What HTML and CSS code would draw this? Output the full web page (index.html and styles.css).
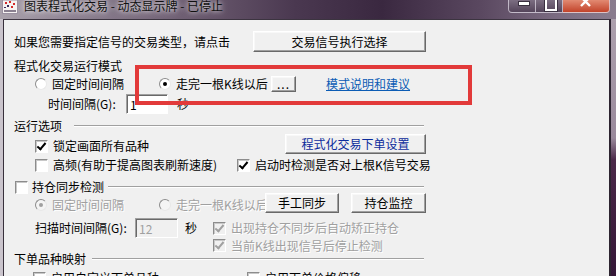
FILE: index.html
```html
<!DOCTYPE html>
<html>
<head>
  <meta charset="UTF-8">
  <title>图表程式化交易 - 动态显示牌 - 已停止</title>
  <link rel="stylesheet" href="styles.css">
</head>
<body>
  <div class="titlebar">
    <svg class="app-icon" width="16" height="14" viewBox="0 0 16 14">
      <rect x="0.5" y="0" width="15" height="13.5" fill="#f6f2f2" stroke="#9a90a0"/>
      <rect x="3" y="2" width="2" height="2" fill="#d42a2a"/>
      <rect x="7" y="1" width="2" height="2" fill="#d42a2a"/>
      <rect x="11" y="3" width="2" height="2" fill="#d42a2a"/>
      <rect x="5" y="5" width="2" height="2" fill="#3a2a5a"/>
      <rect x="9" y="6" width="2" height="2" fill="#d42a2a"/>
      <rect x="2" y="7" width="2" height="1" fill="#3a2a5a"/>
      <rect x="2" y="10" width="12" height="2" fill="#8a8090"/>
    </svg>
    <span class="title-text">图表程式化交易 - 动态显示牌 - 已停止</span>
    <div class="caption">
      <span class="cap-btn cap-min"></span>
      <span class="cap-btn cap-max"></span>
      <span class="cap-btn cap-close">
        <svg width="12" height="8" viewBox="0 0 12 8">
          <path d="M1 -3 L10 6 M10 -3 L1 6" stroke="#fff" stroke-width="2.4"/>
        </svg>
      </span>
    </div>
  </div>

  <div class="frame">
    <div class="left-edge"></div>
    <div class="client">
      <div class="row r-head">
        <span class="lbl">如果您需要指定信号的交易类型，请点击</span>
        <button class="btn btn-signal">交易信号执行选择</button>
      </div>

      <div class="row r-mode">
        <span class="lbl">程式化交易运行模式</span>
      </div>

      <div class="row r-radios">
        <div class="opt w-fixed"><span class="radio"></span><span class="lbl">固定时间间隔</span></div>
        <div class="opt w-bar"><span class="radio on"></span><span class="lbl">走完一根K线以后</span></div>
        <button class="btn btn-dots">...</button>
        <a class="link">模式说明和建议</a>
      </div>

      <div class="row r-interval">
        <span class="lbl w-interval">时间间隔(G):</span>
        <input class="field f-interval" type="text" value="1">
        <span class="lbl sec">秒</span>
      </div>

      <div class="row r-group">
        <span class="lbl">运行选项</span>
        <span class="rule rule-opts"></span>
      </div>

      <div class="row r-lock">
        <div class="opt"><span class="chk on"></span><span class="lbl">锁定画面所有品种</span></div>
        <button class="btn btn-order">程式化交易下单设置</button>
      </div>

      <div class="row r-hf">
        <div class="opt w-hf"><span class="chk"></span><span class="lbl">高频(有助于提高图表刷新速度)</span></div>
        <div class="opt"><span class="chk on"></span><span class="lbl">启动时检测是否对上根K信号交易</span></div>
      </div>

      <div class="row r-sync-head">
        <div class="opt opt-tight"><span class="chk"></span><span class="lbl">持仓同步检测</span></div>
        <span class="rule rule-sync"></span>
      </div>

      <div class="row r-sync-mode">
        <div class="opt w-fixed off"><span class="radio on"></span><span class="lbl">固定时间间隔</span></div>
        <div class="opt w-bar2 off"><span class="radio"></span><span class="lbl">走完一根K线以后</span></div>
        <button class="btn btn-manual">手工同步</button>
        <button class="btn btn-monitor">持仓监控</button>
      </div>

      <div class="row r-scan">
        <span class="lbl w-scan">扫描时间间隔(G):</span>
        <input class="field f-scan" type="text" value="12" disabled>
        <span class="lbl sec2">秒</span>
        <div class="opt off opt-fix"><span class="chk on"></span><span class="lbl">出现持仓不同步后自动矫正持仓</span></div>
      </div>

      <div class="row r-stop">
        <div class="opt off"><span class="chk on"></span><span class="lbl">当前K线出现信号后停止检测</span></div>
      </div>

      <div class="row r-group r-map-head">
        <span class="lbl">下单品种映射</span>
        <span class="rule rule-map"></span>
      </div>

      <div class="row r-map">
        <div class="opt w-map"><span class="chk"></span><span class="lbl">启用自定义下单品种</span></div>
        <div class="opt"><span class="chk"></span><span class="lbl">启用下单价格偏移</span></div>
      </div>

      <div class="mark"></div>
    </div>
  </div>
</body>
</html>
```

FILE: styles.css
```css
* {
  box-sizing: border-box;
}

html, body {
  margin: 0;
  padding: 0;
}

body {
  width: 616px;
  height: 276px;
  overflow: hidden;
  font-family: "Noto Sans CJK SC", "Noto Sans", sans-serif;
  font-size: 12px;
  color: #000;
  background: linear-gradient(180deg, #b0a4b0 0%, #9a8a9c 50%, #4a2848 58%, #341636 100%);
}

/* Aero title bar */
.titlebar {
  display: flex;
  align-items: flex-start;
  height: 19px;
  padding-left: 2px;
  background: linear-gradient(90deg, #aaa2ac 0%, #8e8292 12%, #6e5e72 30%, #4a3850 48%, #3a2840 62%, #5a4860 78%, #7a6a80 90%, #8a7c8e 100%);
}

.app-icon {
  flex: none;
}

.title-text {
  margin-left: 6px;
  line-height: 12px;
  color: #111;
  white-space: nowrap;
  text-shadow: 0 0 4px rgba(255, 255, 255, 0.9), 0 0 8px rgba(255, 255, 255, 0.6);
}

.caption {
  display: flex;
  margin-left: auto;
  margin-right: 6px;
}

.cap-btn {
  position: relative;
  height: 13px;
  border: 1px solid rgba(220, 214, 226, 0.75);
  border-top: none;
  background: linear-gradient(180deg, #7c6e82, #54445a);
  overflow: hidden;
}

.cap-min {
  width: 28px;
  border-bottom-left-radius: 4px;
}

.cap-max {
  width: 27px;
  border-left: none;
}

.cap-close {
  width: 47px;
  border-left: none;
  border-bottom-right-radius: 4px;
  background: linear-gradient(180deg, #e28a72, #c2432a);
  display: flex;
  justify-content: center;
}

.cap-min::after {
  content: '';
  position: absolute;
  left: 9px;
  top: 1px;
  width: 10px;
  height: 3px;
  background: #fff;
  border: 1px solid #3a3040;
}

.cap-max::after {
  content: '';
  position: absolute;
  left: 9px;
  top: -3px;
  width: 8px;
  height: 10px;
  border: 2px solid #fff;
  outline: 1px solid #3a3040;
}

/* frame + client area */
.frame {
  display: flex;
  height: 257px;
}

.left-edge {
  width: 3px;
  background: #cac4cc;
}

.client {
  position: relative;
  width: 608px;
  height: 257px;
  padding: 11px 0 0 10px;
  background: #f0f0f0;
  border-left: 1px solid #38303c;
  border-top: 1px solid #3c3440;
  border-right: 2px solid #2c2430;
  overflow: hidden;
}

.row {
  display: flex;
  align-items: center;
  width: 412px;
}

.lbl {
  line-height: 14px;
  white-space: nowrap;
}

.opt {
  display: flex;
  align-items: center;
  gap: 5px;
  flex: none;
}

.opt-tight {
  gap: 4px;
}

.off {
  color: #a0a0a0;
  text-shadow: 1px 1px 0 #fff;
}

/* controls */
.btn {
  flex: none;
  height: 20px;
  padding: 0;
  font: inherit;
  color: #000;
  line-height: 16px;
  background: #f0f0f0;
  border: 1px solid;
  border-color: #fff #696969 #696969 #fff;
  box-shadow: inset -1px -1px #a0a0a0, inset 1px 1px #f8f8f8;
}

.chk {
  position: relative;
  flex: none;
  width: 13px;
  height: 13px;
  background: #fff;
  border: 1px solid;
  border-color: #8c8c8c #fff #fff #8c8c8c;
  box-shadow: inset 1px 1px #c8c8c8;
}

.chk.on::after {
  content: '';
  position: absolute;
  left: 3px;
  top: 0;
  width: 3px;
  height: 7px;
  border: solid #000;
  border-width: 0 2px 2px 0;
  transform: rotate(40deg);
}

.off .chk {
  background: #f0f0f0;
}

.off .chk.on::after {
  border-color: #a0a0a0;
}

.radio {
  position: relative;
  flex: none;
  width: 12px;
  height: 12px;
  border-radius: 50%;
  background: #fff;
  border: 1px solid;
  border-color: #8c8c8c #e8e8e8 #e8e8e8 #8c8c8c;
}

.radio.on::after {
  content: '';
  position: absolute;
  left: 3px;
  top: 3px;
  width: 4px;
  height: 4px;
  border-radius: 50%;
  background: #000;
}

.off .radio {
  background: #f4f4f4;
}

.off .radio.on::after {
  background: #a0a0a0;
}

.field {
  flex: none;
  height: 20px;
  padding: 0 0 0 3px;
  font: inherit;
  color: #000;
  background: #fff;
  border: 1px solid;
  border-color: #a0a0a0 #fff #fff #a0a0a0;
  box-shadow: inset 1px 1px #696969;
  outline: none;
}

.field:disabled {
  color: #a0a0a0;
  background: #f0f0f0;
}

.rule {
  flex: 1;
  height: 2px;
  margin-right: 2px;
  border-top: 1px solid #a0a0a0;
  border-bottom: 1px solid #fff;
}

.link {
  margin-left: 30px;
  line-height: 14px;
  color: #0b5cb5;
  text-decoration: underline;
  white-space: nowrap;
}

/* rows */
.r-head {
  height: 21px;
}

.btn-signal {
  width: 173px;
  height: 21px;
  margin-left: auto;
}

.r-mode {
  height: 16px;
  margin-top: 6px;
}

.r-radios {
  height: 16px;
  margin-top: 2px;
  padding-left: 21px;
}

.w-fixed {
  width: 124px;
}

.w-bar {
  width: 112px;
}

.btn-dots {
  width: 25px;
  height: 16px;
  line-height: 12px;
  letter-spacing: 1px;
}

.r-interval {
  height: 20px;
  margin-top: 2px;
  padding-left: 34px;
}

.w-interval {
  width: 78px;
}

.f-interval {
  width: 42px;
}

.sec {
  margin-left: 9px;
}

.r-group {
  height: 14px;
  margin-top: 5px;
}

.rule-opts {
  margin-left: 12px;
}

.r-lock {
  height: 21px;
  padding-left: 21px;
}

.r-lock .opt {
  margin-top: 5px;
}

.btn-order {
  width: 141px;
  margin-left: auto;
  color: #0c2c9c;
}

.r-hf {
  height: 14px;
  margin-top: 4px;
  padding-left: 21px;
}

.w-hf {
  width: 202px;
}

.r-sync-head {
  height: 12px;
  margin-top: 9px;
  padding-left: 1px;
}

.rule-sync {
  margin-left: 4px;
}

.r-sync-mode {
  height: 20px;
  padding-left: 21px;
}

.r-sync-mode .opt {
  margin-top: 4px;
}

.w-bar2 {
  width: 106px;
}

.btn-manual {
  width: 74px;
}

.btn-monitor {
  width: 75px;
  margin-left: 12px;
}

.r-scan {
  height: 20px;
  margin-top: 5px;
  padding-left: 21px;
}

.w-scan {
  width: 100px;
}

.f-scan {
  width: 43px;
}

.sec2 {
  margin-left: 7px;
}

.opt-fix {
  margin-left: 16px;
}

.r-stop {
  height: 13px;
  margin-top: 1px;
  padding-left: 199px;
}

.r-map-head {
  height: 13px;
  margin-top: 0;
}

.rule-map {
  margin-left: 6px;
}

.r-map {
  height: 14px;
  margin-top: 6px;
  padding-left: 19px;
}

.w-map {
  width: 214px;
}

/* red annotation box drawn over the dialog */
.mark {
  position: absolute;
  left: 131px;
  top: 45px;
  width: 337px;
  height: 40px;
  border: 4px solid #e23a3a;
  pointer-events: none;
}
```
